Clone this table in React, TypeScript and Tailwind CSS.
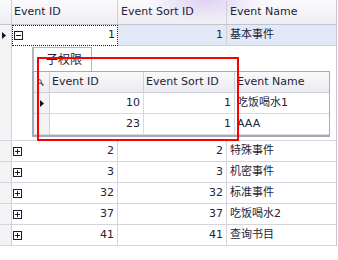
import React from 'react'

const ROWS = [
  { id: 2, sort: 2, name: '特殊事件' },
  { id: 3, sort: 3, name: '机密事件' },
  { id: 32, sort: 32, name: '标准事件' },
  { id: 37, sort: 37, name: '吃饭喝水2' },
  { id: 41, sort: 41, name: '查询书目' },
]

const SUB_ROWS = [
  { id: 10, sort: 1, name: '吃饭喝水1', current: true },
  { id: 23, sort: 1, name: 'AAA', current: false },
]

function ExpandBox({ open }: { open: boolean }) {
  return (
    <svg width="9" height="9" viewBox="0 0 9 9" className="shrink-0">
      <rect x="0.5" y="0.5" width="8" height="8" fill="#fff" stroke="#1c1c30" />
      <line x1="2" y1="4.5" x2="7" y2="4.5" stroke="#1c1c30" />
      {!open && <line x1="4.5" y1="2" x2="4.5" y2="7" stroke="#1c1c30" />}
    </svg>
  )
}

function Arrow() {
  return (
    <svg width="4" height="7" viewBox="0 0 4 7">
      <polygon points="0,0 4,3.5 0,7" fill="#101020" />
    </svg>
  )
}

export default function App() {
  return (
    <div className="w-[338px] h-[260px] bg-white overflow-hidden text-[11px] text-[#23233a] font-['DejaVu_Sans','Noto_Sans_CJK_SC',sans-serif] relative">
      <div className="w-[337px] border-r border-[#c8c8d2]">
        {/* Header */}
        <div className="flex h-[25px] border-b border-[#c4c4ce] bg-[radial-gradient(ellipse_60px_22px_at_205px_0px,rgba(196,176,232,.55),transparent),linear-gradient(#fbfbfd,#eeeef3)]">
          <div className="w-[12px] border-r border-[#d0d0da]" />
          <div className="w-[106px] border-r border-[#d0d0da] flex items-center pl-[2px]">Event ID</div>
          <div className="w-[109px] border-r border-[#d0d0da] flex items-center pl-[3px]">Event Sort ID</div>
          <div className="flex-1 flex items-center pl-[3px]">Event Name</div>
        </div>

        {/* Row 1, expanded */}
        <div className="flex h-[21px]">
          <div className="w-[12px] border-r border-[#d0d0da] bg-[#f3f3f6] flex items-center pl-[2px]">
            <Arrow />
          </div>
          <div className="w-[106px] border border-dotted border-[#202030] flex items-center justify-between pl-[1px] pr-[2px]">
            <ExpandBox open />
            <span>1</span>
          </div>
          <div className="w-[109px] border-r border-b border-[#d0d0da] bg-[#e1e9f9] flex items-center justify-end pr-[3px]">1</div>
          <div className="flex-1 border-b border-[#d0d0da] bg-[#e1e9f9] flex items-center pl-[3px]">基本事件</div>
        </div>

        {/* Detail */}
        <div className="flex h-[95px] border-b border-[#d4d4dc]">
          <div className="w-[12px] border-r border-[#d0d0da] bg-[#f3f3f6]" />
          <div className="pl-[20px] pt-[1px] flex flex-col">
            <div className="flex">
              <div className="w-[60px] h-[24px] border-t border-l-2 border-r border-[#b4b4bc] flex items-center pl-[12px] text-[12px]">子权限</div>
            </div>
            <div className="w-[298px] border-l-2 border-b-2 border-t border-r border-[#a8a8b2]">
              <div className="flex h-[21px] border-b border-[#d0d0da] bg-[linear-gradient(#f9f9fb,#ececf1)]">
                <div className="w-[16px] border-r border-[#d0d0da] flex items-center pl-[3px]">
                  <svg width="7" height="7" viewBox="0 0 7 7">
                    <circle cx="2.5" cy="2.5" r="1.8" fill="none" stroke="#404050" />
                    <line x1="3.8" y1="3.8" x2="6.5" y2="6.5" stroke="#404050" strokeWidth="1.4" />
                  </svg>
                </div>
                <div className="w-[94px] border-r border-[#d0d0da] flex items-center pl-[2px]">Event ID</div>
                <div className="w-[91px] border-r border-[#d0d0da] flex items-center pl-[2px]">Event Sort ID</div>
                <div className="flex-1 flex items-center pl-[2px]">Event Name</div>
              </div>
              {SUB_ROWS.map(r => (
                <div key={r.id} className="flex h-[21px] border-b border-[#d8d8e0]">
                  <div className="w-[16px] border-r border-[#d0d0da] bg-[#f3f3f6] flex items-center pl-[6px]">
                    {r.current && <Arrow />}
                  </div>
                  <div className="w-[94px] border-r border-[#d8d8e0] flex items-center justify-end pr-[3px]">{r.id}</div>
                  <div className="w-[91px] border-r border-[#d8d8e0] flex items-center justify-end pr-[3px]">{r.sort}</div>
                  <div className="flex-1 flex items-center pl-[2px]">{r.name}</div>
                </div>
              ))}
            </div>
          </div>
        </div>

        {/* Collapsed rows */}
        {ROWS.map(r => (
          <div key={r.id} className="flex h-[21px] border-b border-[#d4d4dc]">
            <div className="w-[12px] border-r border-[#d0d0da] bg-[#f3f3f6]" />
            <div className="w-[106px] border-r border-[#d4d4dc] flex items-center justify-between pl-[1px] pr-[3px]">
              <ExpandBox open={false} />
              <span>{r.id}</span>
            </div>
            <div className="w-[109px] border-r border-[#d4d4dc] flex items-center justify-end pr-[3px]">{r.sort}</div>
            <div className="flex-1 flex items-center pl-[3px]">{r.name}</div>
          </div>
        ))}
      </div>

      {/* Red highlight frame */}
      <div className="absolute left-[37px] top-[57px] w-[202px] h-[84px] border-2 border-[#ff0000] pointer-events-none" />
    </div>
  )
}
